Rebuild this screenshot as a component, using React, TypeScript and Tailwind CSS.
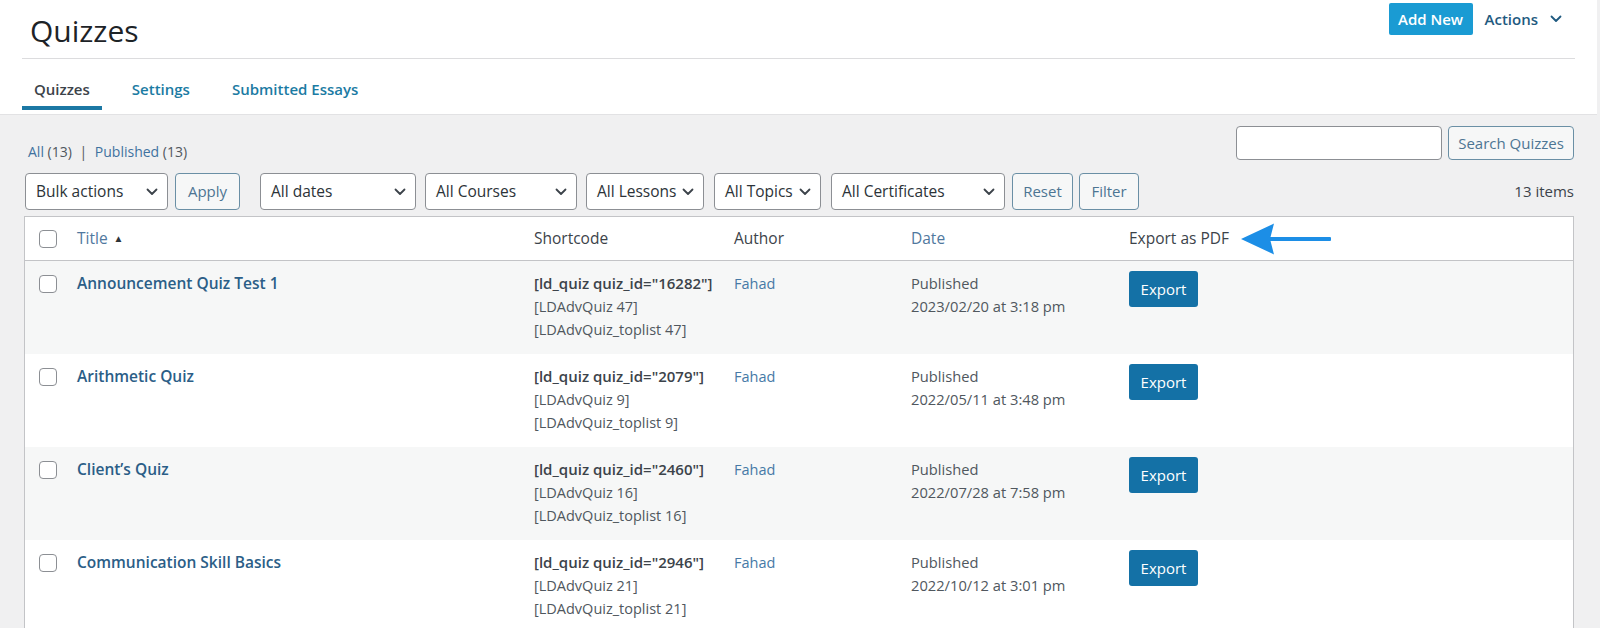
import React from 'react';

const font = { fontFamily: '"Open Sans", "Noto Sans", Arial, sans-serif' };

const Chevron = ({ className = '' }: { className?: string }) => (
  <svg width="12" height="8" viewBox="0 0 12 8" className={className}>
    <path d="M1.5 1.5 L6 6 L10.5 1.5" fill="none" stroke="currentColor" strokeWidth="1.8" strokeLinecap="round" strokeLinejoin="round" />
  </svg>
);

const Checkbox = () => (
  <span className="block w-[18px] h-[18px] bg-white border border-[#8c8f94] rounded-[4px]" />
);

const Select = ({ label, w }: { label: string; w: string }) => (
  <div className={`${w} h-[37px] bg-white border border-[#8c8f94] rounded-[4px] flex items-center justify-between pl-[10px] pr-[9px] text-[15.5px] text-[#2c3338]`}>
    <span className="whitespace-nowrap">{label}</span>
    <Chevron className="text-[#3c434a] ml-[4px] shrink-0" />
  </div>
);

const SecButton = ({ label, w, h = 'h-[37px]' }: { label: string; w: string; h?: string }) => (
  <button className={`${w} ${h} bg-[#f6f7f7] border border-[#6a8fa5] rounded-[4px] text-[15px] text-[#4d7593]`}>{label}</button>
);

const rows = [
  { title: 'Announcement Quiz Test 1', id: '16282', n: '47', date: '2023/02/20 at 3:18 pm' },
  { title: 'Arithmetic Quiz', id: '2079', n: '9', date: '2022/05/11 at 3:48 pm' },
  { title: 'Client’s Quiz', id: '2460', n: '16', date: '2022/07/28 at 7:58 pm' },
  { title: 'Communication Skill Basics', id: '2946', n: '21', date: '2022/10/12 at 3:01 pm' },
];

const cols = 'grid grid-cols-[52px_457px_200px_177px_218px_1fr]';

export default function App() {
  return (
    <div className="w-[1600px] h-[628px] overflow-hidden bg-[#f0f0f1]" style={font}>
      {/* header */}
      <div className="h-[115px] bg-white mr-[3px] px-[22px] border-b border-[#e2e2e4]">
        <div className="h-[59px] flex justify-between items-start border-b border-[#dcdcde]">
          <h1 className="mt-[13px] ml-[8px] text-[30px] leading-[36px] font-normal text-[#1d2327]">Quizzes</h1>
          <div className="flex items-center mt-[3px] mr-[13px]">
            <button className="w-[84px] h-[32px] bg-[#1a9bd3] rounded-[2px] text-white text-[15px] font-semibold">Add New</button>
            <span className="ml-[12px] text-[15px] font-semibold text-[#1f5a80]">Actions</span>
            <Chevron className="ml-[12px] text-[#1f5a80]" />
          </div>
        </div>
        <div className="h-[55px] flex items-end gap-[18px] pb-[4px]">
          <div className="px-[12px] pb-[7px] border-b-4 border-[#1c78a4] text-[15px] leading-[20px] font-semibold text-[#3c434a]">Quizzes</div>
          <div className="px-[12px] pb-[7px] border-b-4 border-transparent text-[15px] leading-[20px] font-semibold text-[#1b7ba3]">Settings</div>
          <div className="px-[12px] pb-[7px] border-b-4 border-transparent text-[15px] leading-[20px] font-semibold text-[#1b7ba3]">Submitted Essays</div>
        </div>
      </div>

      {/* body */}
      <div className="pl-[24px] pr-[26px] pt-[11px]">
        <div className="flex justify-between items-end h-[34px]">
          <div className="text-[14px] leading-[20px] mb-[-2px] ml-[4px] text-[#50575e]">
            <span className="text-[#3f72a0]">All</span> (13) <span className="mx-[4px]">|</span> <span className="text-[#3f72a0]">Published</span> (13)
          </div>
          <div className="flex gap-[6px]">
            <div className="w-[206px] h-[34px] bg-white border border-[#8c8f94] rounded-[4px]" />
            <SecButton label="Search Quizzes" w="w-[126px]" h="h-[34px]" />
          </div>
        </div>

        <div className="mt-[13px] flex items-center h-[37px]">
          <div className="ml-[1px]"><Select label="Bulk actions" w="w-[143px]" /></div>
          <div className="ml-[7px]"><SecButton label="Apply" w="w-[65px]" /></div>
          <div className="ml-[20px]"><Select label="All dates" w="w-[156px]" /></div>
          <div className="ml-[9px]"><Select label="All Courses" w="w-[152px]" /></div>
          <div className="ml-[9px]"><Select label="All Lessons" w="w-[118px]" /></div>
          <div className="ml-[10px]"><Select label="All Topics" w="w-[107px]" /></div>
          <div className="ml-[10px]"><Select label="All Certificates" w="w-[174px]" /></div>
          <div className="ml-[7px]"><SecButton label="Reset" w="w-[61px]" /></div>
          <div className="ml-[6px]"><SecButton label="Filter" w="w-[60px]" /></div>
          <div className="ml-auto text-[15px] text-[#3c434a]">13 items</div>
        </div>

        <div className="mt-[6px] bg-white border border-[#c3c4c7]">
          <div className={`${cols} h-[44px] items-center border-b border-[#c3c4c7] text-[15.5px]`}>
            <div className="pl-[14px]"><Checkbox /></div>
            <div className="flex items-center text-[#50789e]">Title<span className="ml-[6px] text-[10px] text-[#2c3338]">▲</span></div>
            <div className="text-[#3c434a]">Shortcode</div>
            <div className="text-[#3c434a]">Author</div>
            <div className="text-[#50789e]">Date</div>
            <div className="flex items-center text-[#3c434a]">
              Export as PDF
              <svg width="92" height="32" viewBox="0 0 92 32" className="ml-[12px]">
                <path d="M0 16 L33 0.5 L29 16 L33 31.5 Z" fill="#1c8ee6" />
                <rect x="28" y="14" width="62" height="4" rx="1" fill="#1c8ee6" />
              </svg>
            </div>
          </div>
          {rows.map((r, i) => (
            <div key={r.id} className={`${cols} h-[93px] items-start ${i % 2 === 0 ? 'bg-[#f6f7f7]' : 'bg-white'}`}>
              <div className="pl-[14px] pt-[14px]"><Checkbox /></div>
              <div className="pt-[11px] text-[15.5px] leading-[23px] font-semibold text-[#2b5e87]">{r.title}</div>
              <div className="pt-[11px] text-[14.5px] leading-[23px] text-[#50575e]">
                <div className="text-[15px] font-semibold text-[#3c434a]">[ld_quiz quiz_id="{r.id}"]</div>
                <div>[LDAdvQuiz {r.n}]</div>
                <div>[LDAdvQuiz_toplist {r.n}]</div>
              </div>
              <div className="pt-[11px] text-[14.5px] leading-[23px] text-[#4679a6]">Fahad</div>
              <div className="pt-[11px] text-[14.7px] leading-[23px] text-[#50575e]">
                <div>Published</div>
                <div>{r.date}</div>
              </div>
              <div className="pt-[10px]">
                <button className="w-[69px] h-[36px] bg-[#1471a6] rounded-[3px] text-white text-[15px]">Export</button>
              </div>
            </div>
          ))}
        </div>
      </div>
    </div>
  );
}
